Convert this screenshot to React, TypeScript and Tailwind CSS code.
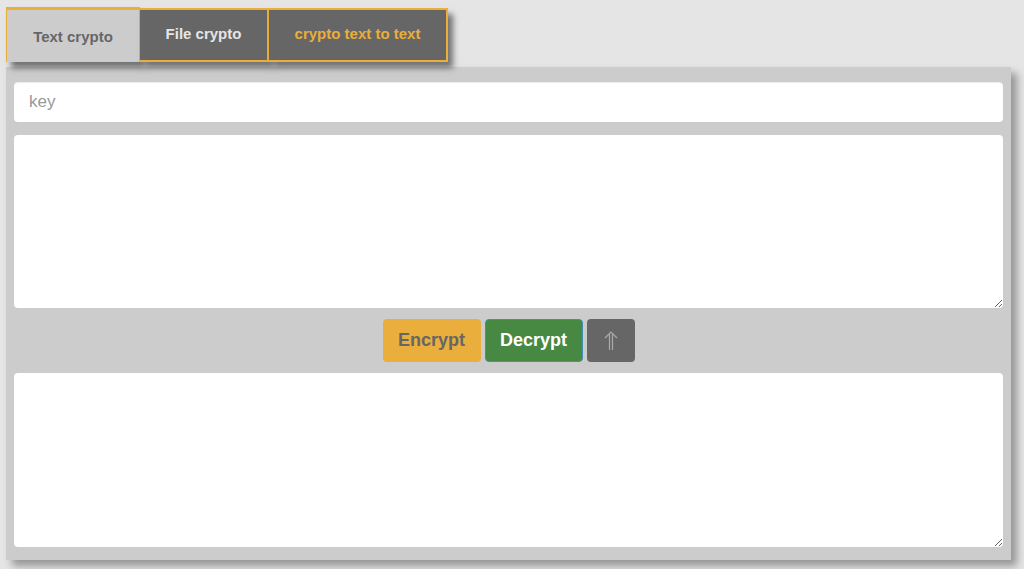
import { useState } from "react";

const tabs = ["Text crypto", "File crypto", "crypto text to text"];

export default function App() {
  const [active, setActive] = useState(0);
  const [key, setKey] = useState("");
  const [input, setInput] = useState("");
  const [output, setOutput] = useState("");

  return (
    <div className="min-h-[569px] bg-[#e5e5e5] px-[6px] pt-[7px] pb-[9px] font-['Liberation_Sans',Arial,sans-serif]">
      {/* tabs */}
      <div className="flex">
        <button
          onClick={() => setActive(0)}
          className={`h-[55px] w-[134px] border-l border-r border-t-[3px] border-[#e9ae3b] text-[15px] font-bold text-[#666] shadow-[5px_6px_6px_rgba(0,0,0,0.5)] ${active === 0 ? "bg-[#cccccc]" : "bg-[#666]"}`}
        >
          <span className="relative top-[1px]">{tabs[0]}</span>
        </button>
        <button
          onClick={() => setActive(1)}
          className="mt-[1px] h-[54px] w-[129px] border-2 border-l-0 border-[#e9ae3b] bg-[#666] pb-[2px] text-[15px] font-bold text-[#e5e5e5] shadow-[5px_6px_6px_rgba(0,0,0,0.5)]"
        >
          {tabs[1]}
        </button>
        <button
          onClick={() => setActive(2)}
          className="mt-[1px] h-[54px] w-[179px] border-2 border-l-0 border-[#e9ae3b] bg-[#666] pb-[2px] text-[15px] font-bold text-[#e9ae3b] shadow-[5px_6px_6px_rgba(0,0,0,0.5)]"
        >
          {tabs[2]}
        </button>
      </div>

      {/* panel */}
      <div className="mt-[5px] mr-[7px] flex flex-col bg-[#cccccc] px-[8px] pt-[15px] pb-[13px] shadow-[6px_6px_8px_rgba(0,0,0,0.35)]">
        <input
          value={key}
          onChange={(e) => setKey(e.target.value)}
          placeholder="key"
          className="h-[40px] w-full rounded-[4px] bg-white px-[15px] text-[17px] text-[#333] shadow-[inset_0_1px_1px_rgba(0,0,0,0.08)] outline-none placeholder:text-[#999]"
        />
        <textarea
          value={input}
          onChange={(e) => setInput(e.target.value)}
          className="mt-[13px] h-[173px] w-full rounded-[4px] bg-white p-2 text-[15px] outline-none"
        />
        <div className="mt-[11px] mb-[11px] flex justify-center gap-[4px]">
          <button className="h-[43px] w-[98px] rounded-[4px] bg-[#e9ae3b] text-[18px] font-bold text-[#666]">
            Encrypt
          </button>
          <button className="h-[43px] w-[98px] rounded-[4px] border border-[#3f8fb0] bg-[#478843] text-[18px] font-bold text-white">
            Decrypt
          </button>
          <button className="flex h-[43px] w-[48px] items-center justify-center rounded-[4px] bg-[#666] text-[#aaa]">
            <svg width="14" height="20" viewBox="0 0 14 20" fill="none" stroke="currentColor" strokeWidth="1.2">
              <path d="M1 7 L7 1 L13 7" />
              <path d="M5.5 3 V19" />
              <path d="M8.5 3 V19" />
            </svg>
          </button>
        </div>
        <textarea
          value={output}
          onChange={(e) => setOutput(e.target.value)}
          className="h-[174px] w-full rounded-[4px] bg-white p-2 text-[15px] outline-none"
        />
      </div>
    </div>
  );
}
